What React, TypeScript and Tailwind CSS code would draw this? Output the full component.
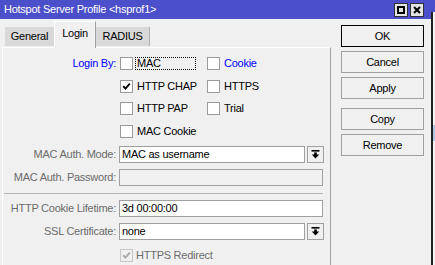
import React from 'react';

function Check({ checked, disabled }: { checked?: boolean; disabled?: boolean }) {
  return (
    <span
      className={`w-[13px] h-[13px] border flex items-center justify-center shrink-0 ${
        disabled ? 'border-[#c8c8c8] bg-[#f0f0f0]' : 'border-[#9a9a9a] bg-white'
      }`}
    >
      {checked && (
        <svg width="9" height="9" viewBox="0 0 9 9">
          <path d="M1.2 4.2 L3.4 6.6 L7.8 1.6" fill="none" stroke={disabled ? '#a8a8a8' : '#000'} strokeWidth="1.9" />
        </svg>
      )}
    </span>
  );
}

function Option({ label, checked, blue, focus }: { label: string; checked?: boolean; blue?: boolean; focus?: boolean }) {
  return (
    <div className="flex items-center gap-[2px]">
      <Check checked={checked} />
      <span
        className={`h-[13px] flex items-center pl-px ${focus ? 'w-[61px] border border-dotted border-black' : 'border border-transparent'} ${
          blue ? 'text-[#0000ff]' : 'text-black'
        }`}
      >
        {label}
      </span>
    </div>
  );
}

function DropIcon() {
  return (
    <svg width="9" height="9" viewBox="0 0 9 9">
      <rect x="0.5" y="0" width="8" height="1.6" fill="#000" />
      <rect x="3.2" y="2.4" width="2.6" height="2.6" fill="#000" />
      <path d="M0.8 4.6 H8.2 L4.5 8.6 Z" fill="#000" />
    </svg>
  );
}

function Label({ children, blue }: { children: React.ReactNode; blue?: boolean }) {
  return <div className={`w-[113px] text-right shrink-0 ${blue ? 'text-[#0000ff]' : 'text-[#6b6b6b]'}`}>{children}</div>;
}

function Field({ label, value, select, disabled }: { label: string; value?: string; select?: boolean; disabled?: boolean }) {
  return (
    <div className="flex items-center h-[23px]">
      <Label>{label}</Label>
      <div className="ml-[3px] flex gap-[2px]">
        <div
          className={`h-[17px] border border-[#a0a0a0] flex items-center pl-[2px] text-black ${
            select ? 'w-[186px]' : 'w-[204px]'
          } ${disabled ? 'bg-[#f0f0f0]' : 'bg-white'}`}
        >
          {value}
        </div>
        {select && (
          <div className="w-[17px] h-[17px] border border-[#a0a0a0] bg-[#f0f0f0] flex items-center justify-center">
            <DropIcon />
          </div>
        )}
      </div>
    </div>
  );
}

function Btn({ children, primary }: { children: React.ReactNode; primary?: boolean }) {
  return (
    <div
      className={`w-[83px] h-[22px] border flex items-center justify-center text-black bg-[#f0f0f0] ${
        primary ? 'border-black' : 'border-[#a0a0a0]'
      }`}
    >
      {children}
    </div>
  );
}

export default function App() {
  return (
    <div className="w-[435px] h-[265px] overflow-hidden flex bg-[#f0f0f0] font-['Liberation_Sans',Arial,sans-serif] text-[11px] tracking-[-0.25px] leading-none">
      <div className="w-[431px] flex flex-col shrink-0">
        {/* title bar */}
        <div className="h-[19px] bg-[#4b4fc9] flex items-center justify-between pl-[4px] pr-[7px] shrink-0">
          <span className="text-white">Hotspot Server Profile &lt;hsprof1&gt;</span>
          <div className="flex gap-[2px]">
            <div className="w-[14px] h-[14px] bg-[#e4e4e4] border border-[#303030] flex items-center justify-center">
              <span className="w-[8px] h-[8px] border-2 border-black" />
            </div>
            <div className="w-[14px] h-[14px] bg-[#e4e4e4] border border-[#303030] flex items-center justify-center">
              <svg width="8" height="8" viewBox="0 0 8 8">
                <path d="M1 1 L7 7 M7 1 L1 7" stroke="#000" strokeWidth="2" />
              </svg>
            </div>
          </div>
        </div>

        <div className="flex flex-1">
          {/* tabs + panel */}
          <div className="w-[331px] pl-[2px] flex flex-col">
            <div className="h-[28px] flex items-end pl-[3px] shrink-0">
              <div className="w-[49px] h-[19px] bg-[#d9d9d9] flex items-center justify-center text-black mb-px">General</div>
              <div className="relative z-10 -mb-px w-[42px] h-[27px] bg-[#f0f0f0] border-l border-t border-white border-r-[#a0a0a0] border-r flex items-center justify-center text-black pb-[3px]">
                Login
              </div>
              <div className="w-[54px] h-[19px] bg-[#d9d9d9] border-r border-[#b0b0b0] flex items-center justify-center text-black mb-px">RADIUS</div>
            </div>

            <div className="flex-1 border-l border-t border-white border-r border-r-[#a0a0a0] pt-[4px]">
              <div className="flex items-center h-[23px]">
                <Label blue>Login By:</Label>
                <div className="ml-[4px] w-[87px]">
                  <Option label="MAC" focus />
                </div>
                <Option label="Cookie" blue />
              </div>
              <div className="flex items-center h-[22px]">
                <Label> </Label>
                <div className="ml-[4px] w-[87px]">
                  <Option label="HTTP CHAP" checked />
                </div>
                <Option label="HTTPS" />
              </div>
              <div className="flex items-center h-[23px]">
                <Label> </Label>
                <div className="ml-[4px] w-[87px]">
                  <Option label="HTTP PAP" />
                </div>
                <Option label="Trial" />
              </div>
              <div className="flex items-center h-[23px]">
                <Label> </Label>
                <div className="ml-[4px] w-[87px]">
                  <Option label="MAC Cookie" />
                </div>
              </div>

              <Field label="MAC Auth. Mode:" value="MAC as username" select />
              <Field label="MAC Auth. Password:" disabled />

              <div className="h-[8px] flex items-center">
                <div className="ml-[1px] w-[319px] h-px bg-[#b4b4b4]" />
              </div>

              <Field label="HTTP Cookie Lifetime:" value="3d 00:00:00" />
              <Field label="SSL Certificate:" value="none" select />

              <div className="flex items-center h-[24px]">
                <Label> </Label>
                <div className="ml-[4px] flex items-center gap-[3px] text-[#6d6d6d]">
                  <Check checked disabled />
                  <span>HTTPS Redirect</span>
                </div>
              </div>
            </div>
          </div>

          {/* buttons */}
          <div className="ml-[10px] pt-[6px] flex flex-col">
            <Btn primary>OK</Btn>
            <div className="h-[4px]" />
            <Btn>Cancel</Btn>
            <div className="h-[4px]" />
            <Btn>Apply</Btn>
            <div className="h-[9px]" />
            <Btn>Copy</Btn>
            <div className="h-[4px]" />
            <Btn>Remove</Btn>
          </div>
        </div>
      </div>

      {/* edge of the window behind */}
      <div className="flex-1 flex flex-col">
        <div className="h-[12px] bg-[#4b4fc9]" />
        <div className="flex-1 border-l-2 border-[#202020] bg-[#f4f4f4] flex flex-col">
          <div className="h-[113px]" />
          <div className="h-[16px] bg-[#a9c8ea]" />
        </div>
      </div>
    </div>
  );
}
